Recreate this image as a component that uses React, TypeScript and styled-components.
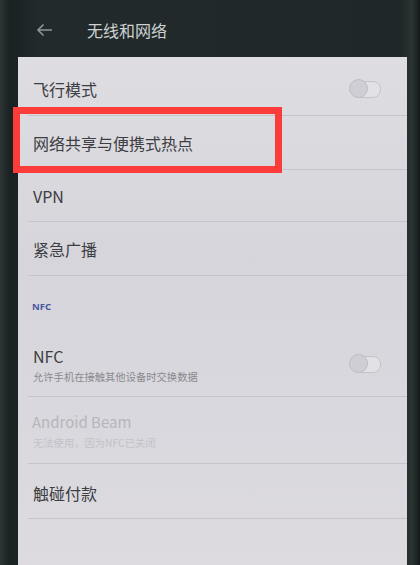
import React from "react";
import styled, { createGlobalStyle } from "styled-components";

const Global = createGlobalStyle`
  html, body { margin: 0; padding: 0; }
  body {
    width: 420px; height: 565px; overflow: hidden;
    background: #1f2627;
    font-family: "Noto Sans CJK SC", "Noto Sans", sans-serif;
  }
`;

const Phone = styled.div`
  width: 420px;
  height: 565px;
  display: flex;
  flex-direction: column;
  background: linear-gradient(90deg, #2c3633 0px, #1a2122 10px, #222a2b 40px, #1f2728 400px, #2a3432 412px, #141a1b 420px);
  position: relative;
  overflow: hidden;
`;

const Header = styled.div`
  height: 57px;
  flex: none;
  display: flex;
  align-items: center;
  padding: 3px 0 0 36px;
  box-sizing: border-box;
  gap: 34px;
`;

const Title = styled.div`
  color: #cdd1d1;
  font-size: 16px;
`;

const Screen = styled.div`
  flex: 1;
  margin: 0 13px 0 18px;
  background: linear-gradient(180deg, #dedde2 0%, #d6d5db 40%, #d9d8de 70%, #dddbe0 100%);
  display: flex;
  flex-direction: column;
`;

const Row = styled.div<{ $h: number; $pt?: number }>`
  height: ${(p) => p.$h}px;
  box-sizing: border-box;
  padding: ${(p) => p.$pt ?? 0}px 26px 0 15px;
  display: flex;
  align-items: center;
  justify-content: space-between;
  position: relative;
  &::after {
    content: "";
    position: absolute;
    left: 10px;
    right: 0;
    bottom: 0;
    height: 1px;
    background: #c5c4ca;
  }
`;

const TextCol = styled.div`
  display: flex;
  flex-direction: column;
`;

const Label = styled.div<{ $dim?: boolean }>`
  font-size: ${(p) => (p.$dim ? 15 : 16)}px;
  color: ${(p) => (p.$dim ? "#b6b5bb" : "#3d3d42")};
  line-height: 20px;
  margin-left: ${(p) => (p.$dim ? -1 : 0)}px;
`;

const Sub = styled.div<{ $dim?: boolean }>`
  font-size: 10.3px;
  color: ${(p) => (p.$dim ? "#c3c2c8" : "#8a8a90")};
  line-height: 14px;
  margin-top: 4px;
`;

const SectionHead = styled.div`
  height: 56px;
  box-sizing: border-box;
  padding: 24px 0 0 14px;
  font-size: 9.5px;
  font-weight: 700;
  color: #4a56a0;
  font-family: "Noto Sans", sans-serif;
`;

const Toggle = styled.div`
  width: 28px;
  height: 15px;
  border-radius: 8px;
  border: 1.5px solid #c4c3c9;
  background: #e2e1e6;
  position: relative;
  filter: blur(0.6px);
  &::before {
    content: "";
    position: absolute;
    left: -3px;
    top: -3px;
    width: 19px;
    height: 19px;
    border-radius: 50%;
    background: #cfced4;
    border: 1px solid #bdbcc2;
    box-sizing: border-box;
  }
`;

const Highlight = styled.div`
  position: absolute;
  left: 13px;
  top: 107px;
  width: 269px;
  height: 66px;
  box-sizing: border-box;
  border: 7px solid #fc3b3b;
`;

export default function App() {
  return (
    <>
      <Global />
      <Phone>
        <Header>
          <svg width="17" height="14" viewBox="0 0 17 14">
            <path d="M16 7H2M7.5 1.5L2 7l5.5 5.5" stroke="#8f9696" strokeWidth="1.6" fill="none" />
          </svg>
          <Title>无线和网络</Title>
        </Header>
        <Screen>
          <Row $h={59} $pt={5}>
            <Label>飞行模式</Label>
            <Toggle />
          </Row>
          <Row $h={54} $pt={0}>
            <Label>网络共享与便携式热点</Label>
          </Row>
          <Row $h={52}>
            <Label>VPN</Label>
          </Row>
          <Row $h={54} $pt={0}>
            <Label>紧急广播</Label>
          </Row>
          <SectionHead>NFC</SectionHead>
          <Row $h={65} $pt={0}>
            <TextCol>
              <Label>NFC</Label>
              <Sub>允许手机在接触其他设备时交换数据</Sub>
            </TextCol>
            <Toggle />
          </Row>
          <Row $h={67} $pt={0}>
            <TextCol>
              <Label $dim>Android Beam</Label>
              <Sub $dim>无法使用，因为NFC已关闭</Sub>
            </TextCol>
          </Row>
          <Row $h={55} $pt={2}>
            <Label>触碰付款</Label>
          </Row>
        </Screen>
        <Highlight />
      </Phone>
    </>
  );
}
